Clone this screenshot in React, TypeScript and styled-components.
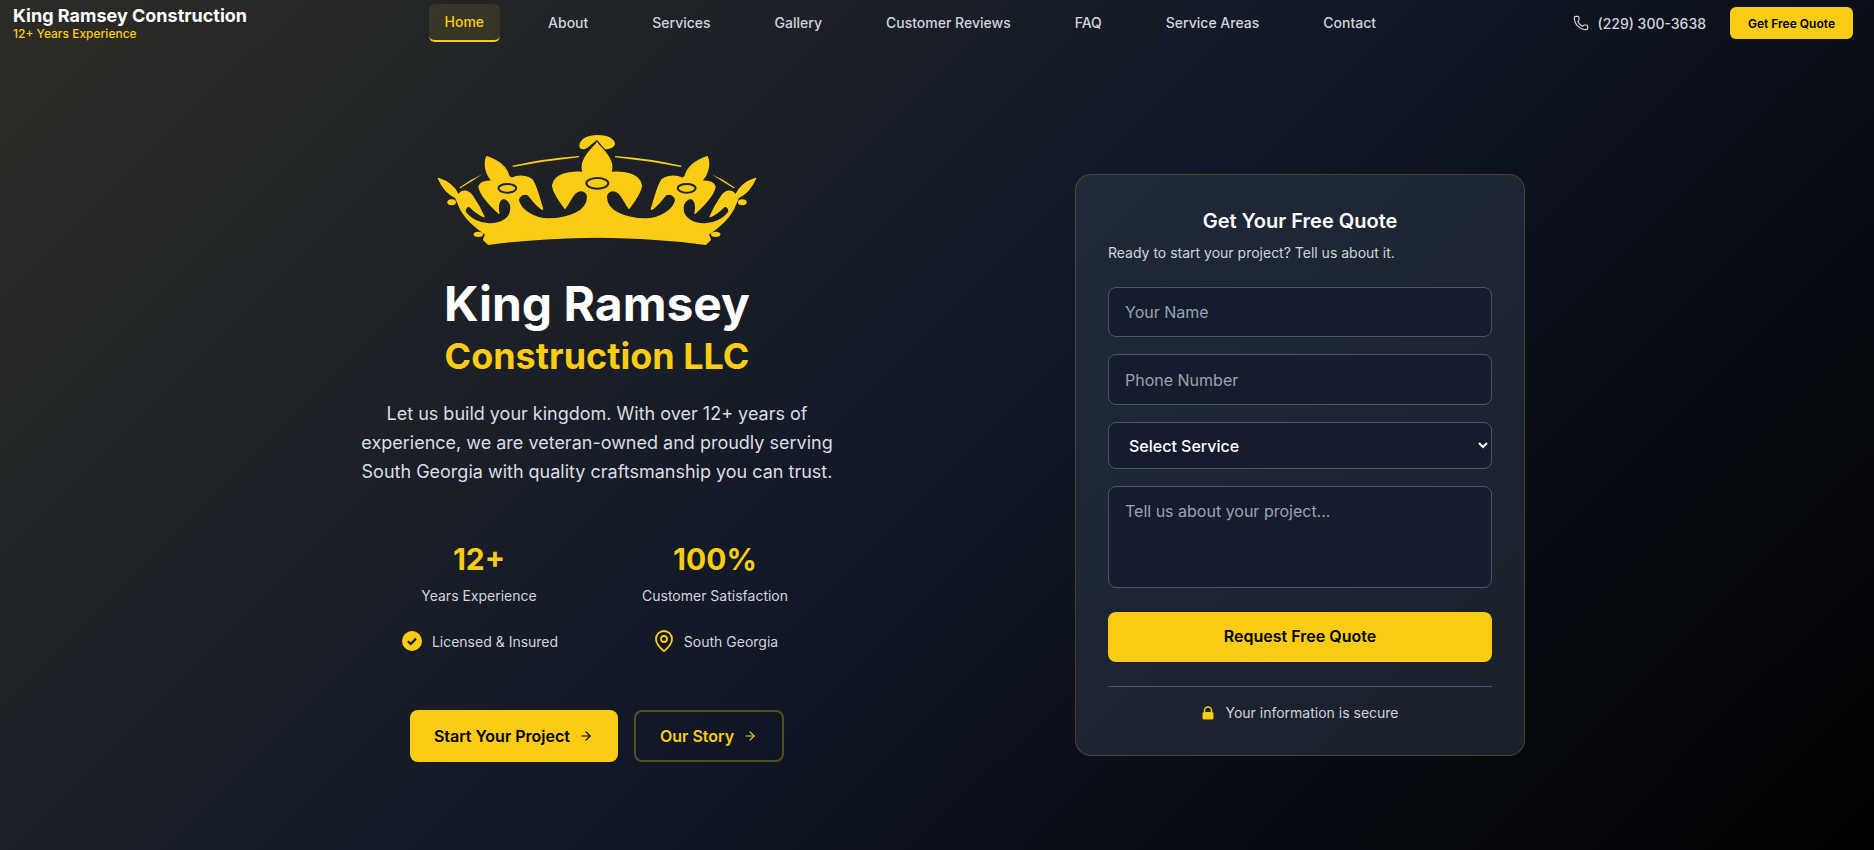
import React from 'react'
import styled, { createGlobalStyle } from 'styled-components'
import { ArrowRight, MapPin, Phone } from 'lucide-react'

const GOLD = '#facc15'

const GlobalStyle = createGlobalStyle`
  * {
    box-sizing: border-box;
  }
  body {
    margin: 0;
    font-family: Inter, "Liberation Sans", sans-serif;
  }
`

const Page = styled.div`
  height: 850px;
  overflow: hidden;
  color: #fff;
  background: linear-gradient(135deg, #2c2c26 0%, #111827 50%, #000 100%);
`

const Header = styled.header`
  display: flex;
  align-items: center;
  justify-content: space-between;
  height: 46px;
  padding: 0 21px 0 13px;
`

const Brand = styled.div`
  display: flex;
  flex-direction: column;
`

const BrandName = styled.div`
  font-size: 18px;
  line-height: 22px;
  font-weight: 700;
`

const BrandSub = styled.div`
  font-size: 12px;
  line-height: 14px;
  font-weight: 500;
  color: ${GOLD};
`

const Nav = styled.nav`
  display: flex;
  gap: 32px;
`

const NavLink = styled.a<{ $active?: boolean }>`
  display: block;
  height: 38px;
  padding: 0 16px;
  font-size: 14px;
  line-height: ${p => (p.$active ? '36px' : '38px')};
  font-weight: 500;
  border-radius: 6px;
  color: ${p => (p.$active ? GOLD : '#d1d5db')};
  background: ${p => (p.$active ? 'rgba(250, 204, 21, 0.1)' : 'transparent')};
  border-bottom: ${p => (p.$active ? `2px solid ${GOLD}` : '0')};
`

const HeaderRight = styled.div`
  display: flex;
  align-items: center;
  gap: 24px;
`

const PhoneLink = styled.a`
  display: flex;
  align-items: center;
  gap: 8px;
  font-size: 14px;
  font-weight: 500;
  color: #d1d5db;
`

const SmallCta = styled.button`
  width: 123px;
  height: 32px;
  padding: 0;
  border: 0;
  border-radius: 6px;
  font: 600 12px Inter, sans-serif;
  color: #000;
  background: ${GOLD};
`

const Hero = styled.main`
  display: flex;
  align-items: flex-start;
  gap: 158px;
  padding-left: 277px;
`

const Intro = styled.section`
  display: flex;
  flex-direction: column;
  align-items: center;
  width: 640px;
  padding-top: 86px;
`

const Crown = styled.svg`
  display: block;
  width: 322px;
  height: 116px;
  margin-bottom: 26px;
`

const Title = styled.h1`
  margin: 0;
  font-size: 48px;
  line-height: 60px;
  font-weight: 700;
  text-align: center;
`

const SubTitle = styled.h2`
  margin: 0 0 21px;
  font-size: 36px;
  line-height: 44px;
  font-weight: 700;
  color: ${GOLD};
  text-align: center;
`

const Lead = styled.p`
  width: 490px;
  margin: 0 0 55px;
  font-size: 18px;
  line-height: 29px;
  text-align: center;
  color: #dbdee3;
`

const Stats = styled.div`
  display: grid;
  grid-template-columns: 220px 220px;
  column-gap: 16px;
  row-gap: 23px;
  margin-bottom: 57px;
`

const Stat = styled.div`
  text-align: center;
`

const StatValue = styled.div`
  font-size: 30px;
  line-height: 36px;
  font-weight: 700;
  color: ${GOLD};
`

const StatLabel = styled.div`
  margin-top: 9px;
  font-size: 14px;
  line-height: 20px;
  color: #d1d5db;
`

const Badge = styled.div`
  display: flex;
  align-items: center;
  justify-content: center;
  gap: 8px;
  height: 24px;
  font-size: 14px;
  color: #d1d5db;
`

const Actions = styled.div`
  display: flex;
  gap: 16px;
`

const HeroButton = styled.a<{ $outline?: boolean }>`
  display: flex;
  align-items: center;
  justify-content: center;
  gap: 8px;
  height: 52px;
  padding: 0 24px;
  font-size: 16px;
  font-weight: 600;
  border-radius: 8px;
  color: ${p => (p.$outline ? GOLD : '#000')};
  background: ${p => (p.$outline ? 'transparent' : GOLD)};
  border: ${p => (p.$outline ? '2px solid rgba(250, 204, 21, 0.3)' : '0')};

  svg {
    margin: 0 1px;
  }
`

const QuoteCard = styled.form`
  width: 450px;
  margin-top: 128px;
  padding: 32px;
  border-radius: 16px;
  border: 1px solid rgba(250, 204, 21, 0.2);
  background: linear-gradient(135deg, #1f2937, #1a202c);
`

const QuoteTitle = styled.h3`
  margin: 0 0 8px;
  font-size: 20px;
  line-height: 28px;
  font-weight: 600;
  text-align: center;
`

const QuoteHint = styled.p`
  margin: 0 0 24px;
  font-size: 14px;
  line-height: 20px;
  color: #d1d5db;
`

const Fields = styled.div`
  display: flex;
  flex-direction: column;
  gap: 17px;
  margin-bottom: 24px;
`

const fieldCss = `
  display: block;
  width: 100%;
  border: 1px solid #4b5563;
  border-radius: 8px;
  padding: 12px 16px;
  font-family: Inter, sans-serif;
  font-size: 16px;
  line-height: 24px;
  color: #fff;
  background: #141c2e;
  outline: none;
  &::placeholder {
    color: #9ca3af;
  }
`

const Input = styled.input<{ $tall?: boolean }>`
  ${fieldCss}
  height: ${p => (p.$tall ? '51px' : '50px')};
`

const Select = styled.select`
  ${fieldCss}
  height: 47px;
  font-weight: 500;
  padding: 0 16px;
`

const Textarea = styled.textarea`
  ${fieldCss}
  height: 102px;
  resize: none;
`

const Submit = styled.button`
  display: block;
  width: 100%;
  height: 50px;
  padding: 0 0 2px;
  border: 0;
  border-radius: 8px;
  font: 600 16px Inter, sans-serif;
  color: #000;
  background: ${GOLD};
`

const Secure = styled.div`
  display: flex;
  align-items: center;
  justify-content: center;
  gap: 10px;
  margin-top: 24px;
  padding-top: 16px;
  border-top: 1px solid #4b5563;
  font-size: 14px;
  line-height: 20px;
  color: #d1d5db;
`

const CrownHalf = () => (
  <>
    <path
      stroke={GOLD}
      strokeWidth="4"
      strokeLinejoin="round"
      d="M487 276 Q300 278 160 298 L146 284 L152 268 C125 250 95 225 78 195 L62 158 C40 148 22 128 10 100 C35 108 58 122 70 150 C82 132 100 136 112 153 C125 172 138 195 147 215 C130 208 115 195 105 185 C96 182 90 190 90 200 C105 222 135 238 165 237 C195 237 228 222 228 190 C228 172 215 160 205 160 C192 162 186 185 192 205 C170 185 135 150 132 125 C135 112 155 108 172 108 C155 90 145 60 155 35 C185 45 215 65 222 95 L230 100 C250 90 280 92 292 105 C305 125 315 165 323 193 C305 185 290 160 280 150 C265 142 250 155 250 165 C255 195 300 222 340 222 C400 222 458 200 458 155 C455 135 435 132 420 145 C405 160 400 180 390 190 C375 170 352 140 353 120 C358 92 395 78 445 82 C435 60 445 35 487 -6 Z"
    />
    <path d="M72 128 Q105 104 142 88 Q110 110 76 130 Z" />
    <path d="M232 62 Q330 40 432 33 L432 37 Q330 48 234 66 Z" />
    <ellipse cx="50" cy="172" rx="13" ry="9" />
    <ellipse cx="130" cy="268" rx="14" ry="8" />
    <ellipse cx="217" cy="130" rx="27" ry="13" stroke="#1f2329" strokeWidth="6" />
  </>
)

const CrownLogo = () => (
  <Crown viewBox="3 -39 966 348" fill={GOLD}>
    <path d="M433 2 C435 -20 460 -30 486 -30 C515 -30 540 -20 540 -3 C538 8 520 14 510 13 L486 -15 L455 10 C445 16 432 12 433 2 Z" />
    <CrownHalf />
    <g transform="translate(972 0) scale(-1 1)">
      <CrownHalf />
    </g>
    <ellipse cx="487" cy="115" rx="33" ry="16" stroke="#1f2329" strokeWidth="6" />
  </Crown>
)

const CheckBadge = () => (
  <svg width="24" height="24" viewBox="0 0 24 24">
    <circle cx="12" cy="12" r="10" fill={GOLD} />
    <path d="M7.8 12.3 L10.8 15 L16 9.4" fill="none" stroke="#111827" strokeWidth="2.2" />
  </svg>
)

const LockIcon = () => (
  <svg width="14" height="14" viewBox="0 0 14 14">
    <path d="M3.5 6.5 V4.5 a3.5 3.5 0 0 1 7 0 V6.5" fill="none" stroke={GOLD} strokeWidth="1.6" />
    <rect x="1.5" y="6" width="11" height="7.5" rx="1.5" fill={GOLD} />
  </svg>
)

const navItems = ['Home', 'About', 'Services', 'Gallery', 'Customer Reviews', 'FAQ', 'Service Areas', 'Contact']

const App = () => {
  return (
    <Page>
      <GlobalStyle />
      <Header>
        <Brand>
          <BrandName>King Ramsey Construction</BrandName>
          <BrandSub>12+ Years Experience</BrandSub>
        </Brand>
        <Nav>
          {navItems.map((item, i) => (
            <NavLink key={item} $active={i === 0}>
              {item}
            </NavLink>
          ))}
        </Nav>
        <HeaderRight>
          <PhoneLink>
            <Phone size={16} strokeWidth={1.75} />
            (229) 300-3638
          </PhoneLink>
          <SmallCta type="button">Get Free Quote</SmallCta>
        </HeaderRight>
      </Header>
      <Hero>
        <Intro>
          <CrownLogo />
          <Title>King Ramsey</Title>
          <SubTitle>Construction LLC</SubTitle>
          <Lead>
            Let us build your kingdom. With over 12+ years of experience, we are veteran-owned and
            proudly serving South Georgia with quality craftsmanship you can trust.
          </Lead>
          <Stats>
            <Stat>
              <StatValue>12+</StatValue>
              <StatLabel>Years Experience</StatLabel>
            </Stat>
            <Stat>
              <StatValue>100%</StatValue>
              <StatLabel>Customer Satisfaction</StatLabel>
            </Stat>
            <Badge>
              <CheckBadge />
              Licensed &amp; Insured
            </Badge>
            <Badge>
              <MapPin size={24} color={GOLD} strokeWidth={1.8} />
              South Georgia
            </Badge>
          </Stats>
          <Actions>
            <HeroButton>
              Start Your Project
              <ArrowRight size={14} />
            </HeroButton>
            <HeroButton $outline>
              Our Story
              <ArrowRight size={14} />
            </HeroButton>
          </Actions>
        </Intro>
        <QuoteCard>
          <QuoteTitle>Get Your Free Quote</QuoteTitle>
          <QuoteHint>Ready to start your project? Tell us about it.</QuoteHint>
          <Fields>
            <Input placeholder="Your Name" />
            <Input $tall placeholder="Phone Number" />
            <Select defaultValue="">
              <option value="">Select Service</option>
              <option>Roofing</option>
              <option>Remodeling</option>
            </Select>
            <Textarea placeholder="Tell us about your project..." />
          </Fields>
          <Submit type="button">Request Free Quote</Submit>
          <Secure>
            <LockIcon />
            Your information is secure
          </Secure>
        </QuoteCard>
      </Hero>
    </Page>
  )
}

export default App
